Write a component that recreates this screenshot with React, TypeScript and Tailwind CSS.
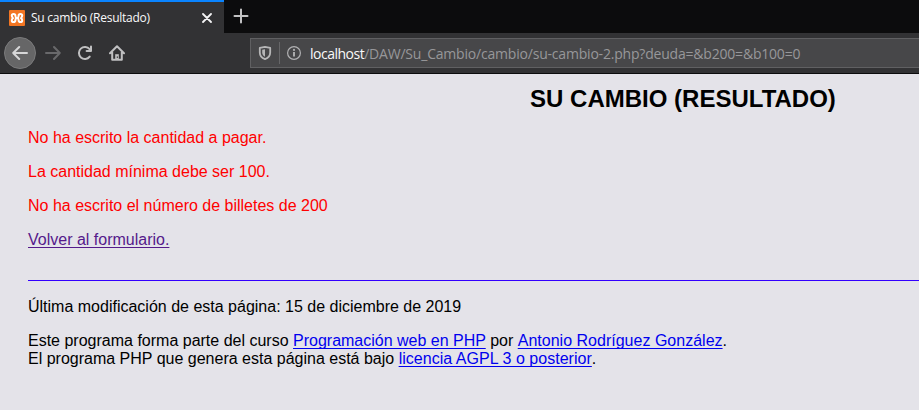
import type { ReactNode } from "react";

const ui = "font-['Open_Sans','Noto_Sans',sans-serif]";

function BrowserTab() {
  return (
    <div className="flex h-[33px] w-[224px] items-center border-t-2 border-[#0a84ff] bg-[#323234] pl-[9px] pr-3">
      <svg width="16" height="16" viewBox="0 0 16 16" className="shrink-0">
        <rect width="16" height="16" rx="1" fill="#f37623" />
        <g fill="none" stroke="#fff" strokeWidth="2" strokeLinecap="round" strokeLinejoin="round">
          <path d="M3.4 7.2Q2.8 6.6 2.8 5.6Q2.8 3.9 4.6 3.9Q6.4 3.9 6.4 5.7Q6.4 7.2 7.4 8Q6.4 8.8 6.4 10.3Q6.4 12.1 4.6 12.1Q2.8 12.1 2.8 10.4Q2.8 9 4 8.2L3.4 7.2" />
          <path d="M12.6 7.2Q13.2 6.6 13.2 5.6Q13.2 3.9 11.4 3.9Q9.6 3.9 9.6 5.7Q9.6 7.2 8.6 8Q9.6 8.8 9.6 10.3Q9.6 12.1 11.4 12.1Q13.2 12.1 13.2 10.4Q13.2 9 12 8.2L12.6 7.2" />
          <path d="M7 8H9" />
        </g>
      </svg>
      <span className={`ml-[6px] grow whitespace-nowrap text-[12px] leading-4 tracking-[-0.25px] text-[#f9f9fa] ${ui}`}>
        Su cambio (Resultado)
      </span>
      <svg width="10" height="10" viewBox="0 0 10 10" className="shrink-0" stroke="#f4f4f5" strokeWidth="1.8" strokeLinecap="round">
        <path d="M1 1L9 9M9 1L1 9" />
      </svg>
    </div>
  );
}

function NavigationBar() {
  return (
    <div className="flex h-10 items-center bg-[#323234]">
      <div className="ml-1 flex size-8 shrink-0 items-center justify-center rounded-full border border-[#7b7b7c] bg-[#666667]">
        <svg width="16" height="16" viewBox="0 0 16 16" fill="none" stroke="#d7d7d8" strokeWidth="2" strokeLinecap="round" strokeLinejoin="round">
          <path d="M15 8H1.2M7.2 2L1.2 8L7.2 14" />
        </svg>
      </div>
      <svg className="ml-[9px] shrink-0" width="16" height="16" viewBox="0 0 16 16" fill="none" stroke="#69696b" strokeWidth="2" strokeLinecap="round" strokeLinejoin="round">
        <path d="M1 8H14.8M9 2L14.8 8L9 14" />
      </svg>
      <svg className="ml-4 shrink-0" width="16" height="16" viewBox="0 0 16 16" fill="none" stroke="#c0c0c1" strokeWidth="2" strokeLinecap="round">
        <path d="M12.7 11.6A6 6 0 1 1 12.6 4.2" />
        <path d="M14 1.6V6H9.6" strokeLinejoin="round" />
      </svg>
      <svg className="ml-4 shrink-0" width="16" height="16" viewBox="0 0 16 16" fill="none" stroke="#c0c0c1" strokeWidth="2" strokeLinecap="round" strokeLinejoin="round">
        <path d="M1 8.2L8 1.2L15 8.2M3.2 7.2V14.8H12.8V7.2" />
        <path d="M8 14V9.2" strokeWidth="3.6" strokeLinecap="butt" />
        <path d="M8.3 13V11.4" stroke="#323234" strokeWidth="1" strokeLinecap="butt" />
      </svg>
      <div className="ml-[125px] flex h-[30px] grow items-center border border-r-0 border-[#606062] bg-[#474749]">
        <svg className="ml-[7px] shrink-0" width="14" height="16" viewBox="0 0 14 16" fill="none">
          <path d="M7 1.8L12.2 2.9V7.5C12.2 10.8 9.8 13.2 7 14.2C4.2 13.2 1.8 10.8 1.8 7.5V2.9Z" stroke="#b6b6b7" strokeWidth="1.8" strokeLinejoin="round" />
          <path d="M7 4.2V11.8C5.2 10.8 4.2 9.2 4.2 7.4V4.8Z" fill="#b6b6b7" />
        </svg>
        <div className="ml-[7px] h-[22px] w-px shrink-0 bg-[#666668]" />
        <svg className="ml-[6px] shrink-0" width="16" height="16" viewBox="0 0 16 16" fill="none">
          <circle cx="8" cy="8" r="6.4" stroke="#b1b1b3" strokeWidth="1.2" />
          <path d="M8 7V11.6" stroke="#b1b1b3" strokeWidth="1.9" />
          <circle cx="8" cy="4.9" r="1.1" fill="#b1b1b3" />
        </svg>
        <span className={`ml-2 mt-0.5 whitespace-nowrap text-[14px] leading-5 tracking-[-0.2px] text-[#97979a] ${ui}`}>
          <span className="tracking-[-0.5px] text-[#f9f9fa]">localhost</span>
          /DAW/Su_Cambio/cambio/su-cambio-2.php?deuda=&amp;b200=&amp;b100=0
        </span>
      </div>
    </div>
  );
}

function Link({ children }: { children: ReactNode }) {
  return <a href="#" className="text-[#0000ee] underline decoration-1 underline-offset-2 [text-decoration-skip-ink:none]">{children}</a>;
}

export default function App() {
  return (
    <div className="h-[410px] w-full overflow-hidden bg-[#e4e3e9]">
      <header className="h-[74px] border-b border-[#0c0c0d] bg-[#0c0c0d]">
        <div className="flex">
          <BrowserTab />
          <svg className="ml-[9px] mt-2 shrink-0" width="16" height="16" viewBox="0 0 16 16" stroke="#c2c2c3" strokeWidth="2" strokeLinecap="round">
            <path d="M8 1.5V14.5M1.5 8H14.5" />
          </svg>
        </div>
        <NavigationBar />
      </header>
      <main className="ml-7 w-[1310px] pt-[11px] font-['Liberation_Sans',Arial,sans-serif] text-[16px] leading-[18px] text-black">
        <h1 className="text-center text-[24px] font-bold leading-[27px]">SU CAMBIO (RESULTADO)</h1>
        <div className="mt-[17px] space-y-4 text-[#ff0000]">
          <p>No ha escrito la cantidad a pagar.</p>
          <p>La cantidad mínima debe ser 100.</p>
          <p>No ha escrito el número de billetes de 200</p>
        </div>
        <p className="mt-4">
          <a href="#" className="text-[#551a8b] underline decoration-1 underline-offset-2 [text-decoration-skip-ink:none]">Volver al formulario.</a>
        </p>
        <footer className="mt-[31px] border-t border-[#3300ff] pt-[17px]">
          <p>Última modificación de esta página: 15 de diciembre de 2019</p>
          <p className="mt-4">
            Este programa forma parte del curso <Link>Programación web en PHP</Link> por <span className="tracking-[0.01px]"><Link>Antonio Rodríguez González</Link></span>.
            <br />
            El programa PHP que genera esta página está bajo <span className="tracking-[0.03px]"><Link>licencia AGPL 3 o posterior</Link></span>.
          </p>
        </footer>
      </main>
    </div>
  );
}
